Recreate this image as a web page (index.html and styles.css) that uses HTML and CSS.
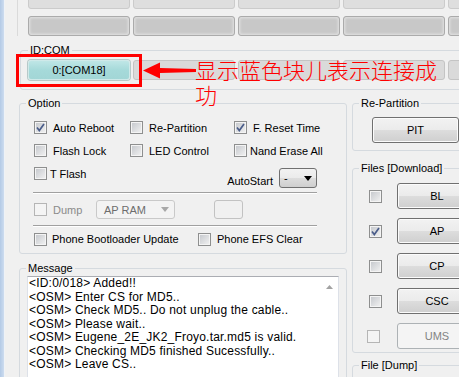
FILE: index.html
```html
<!DOCTYPE html>
<html lang="zh-CN">
<head>
  <meta charset="UTF-8" />
  <title>Odin</title>
  <link rel="stylesheet" href="styles.css">
</head>
<body>

<div class="window">
  <div class="edge"></div>

  <div class="main">
    <div class="ports">
      <div class="slot-row faded">
        <span class="slot"></span><span class="slot"></span><span class="slot"></span><span class="slot"></span><span class="slot"></span>
      </div>
      <div class="slot-row dim">
        <span class="slot"></span><span class="slot"></span><span class="slot"></span><span class="slot"></span><span class="slot"></span>
      </div>
    </div>

    <fieldset class="group idcom">
      <legend>ID:COM</legend>
      <div class="box">
        <div class="slot-row">
          <span class="slot com on">0:[COM18]</span><span class="slot com"></span><span class="slot com"></span><span class="slot com"></span><span class="slot com"></span>
        </div>
      </div>
    </fieldset>

    <div class="columns">
      <div class="left">
        <fieldset class="group option">
          <legend>Option</legend>
          <div class="box">
            <div class="opt-grid">
              <label class="chk"><span class="cb on"><svg viewBox="0 0 11 11"><path d="M2 5.5 L4.3 8.5 L9 2"/></svg></span>Auto Reboot</label>
              <label class="chk"><span class="cb"></span>Re-Partition</label>
              <label class="chk"><span class="cb on"><svg viewBox="0 0 11 11"><path d="M2 5.5 L4.3 8.5 L9 2"/></svg></span>F. Reset Time</label>
              <label class="chk"><span class="cb"></span>Flash Lock</label>
              <label class="chk"><span class="cb"></span>LED Control</label>
              <label class="chk tight"><span class="cb"></span>Nand Erase All</label>
            </div>
            <div class="row3">
              <label class="chk tight"><span class="cb"></span>T Flash</label>
              <div class="autostart">
                <span class="auto-label">AutoStart</span>
                <span class="select">-<svg class="drop" viewBox="0 0 8 5"><path d="M0 0 H8 L4 5 Z"/></svg></span>
              </div>
            </div>
            <div class="sep"></div>
            <div class="dump-row">
              <label class="chk off dump"><span class="cb"></span>Dump</label>
              <span class="combo">AP RAM<svg class="drop" viewBox="0 0 8 5"><path d="M0 0 H8 L4 5 Z"/></svg></span>
              <span class="blank"></span>
            </div>
            <div class="sep second"></div>
            <div class="boot-row">
              <label class="chk boot"><span class="cb"></span>Phone Bootloader Update</label>
              <label class="chk"><span class="cb"></span>Phone EFS Clear</label>
            </div>
          </div>
        </fieldset>

        <fieldset class="group message">
          <legend>Message</legend>
          <div class="box">
            <div class="log">
              <div class="log-text">
                &lt;ID:0/018&gt; Added!!<br>
                &lt;OSM&gt; Enter CS for MD5..<br>
                &lt;OSM&gt; Check MD5.. Do not unplug the cable..<br>
                &lt;OSM&gt; Please wait..<br>
                &lt;OSM&gt; Eugene_2E_JK2_Froyo.tar.md5 is valid.<br>
                &lt;OSM&gt; Checking MD5 finished Sucessfully..<br>
                &lt;OSM&gt; Leave CS..
              </div>
              <div class="scroll"><svg class="up" viewBox="0 0 7 4"><path d="M0 4 L3.5 0 L7 4 Z"/></svg></div>
            </div>
          </div>
        </fieldset>
      </div>

      <div class="right">
        <fieldset class="group repart">
          <legend>Re-Partition</legend>
          <div class="box">
            <button class="btn pit">PIT</button>
          </div>
        </fieldset>

        <fieldset class="group files">
          <legend>Files [Download]</legend>
          <div class="box">
            <div class="file-row"><span class="cb"></span><button class="btn">BL</button></div>
            <div class="file-row"><span class="cb on"><svg viewBox="0 0 11 11"><path d="M2 5.5 L4.3 8.5 L9 2"/></svg></span><button class="btn">AP</button></div>
            <div class="file-row"><span class="cb"></span><button class="btn">CP</button></div>
            <div class="file-row"><span class="cb"></span><button class="btn">CSC</button></div>
            <div class="file-row off"><span class="cb"></span><button class="btn" disabled>UMS</button></div>
          </div>
        </fieldset>

        <fieldset class="group filedump">
          <legend>File [Dump]</legend>
          <div class="box"></div>
        </fieldset>
      </div>
    </div>
  </div>

  <div class="mark"></div>
  <svg class="arrow" viewBox="0 0 53 17"><path d="M0 8.5 L17 0.5 L17 6 L53 7 L53 10 L17 11 L17 16.5 Z"/></svg>
  <p class="note">显示蓝色块儿表示连接成功</p>
</div>

</body>
</html>
```

FILE: styles.css
```css
* {
  margin: 0;
  padding: 0;
  box-sizing: border-box;
}

html, body {
  width: 459px;
  height: 377px;
  overflow: hidden;
  background: #f0f0f0;
}

body {
  font-family: 'Liberation Sans', Arial, sans-serif;
  font-size: 11px;
  color: #000;
}

.window {
  position: relative;
  display: flex;
  height: 377px;
}

.edge {
  flex: none;
  width: 5px;
  background: linear-gradient(90deg, #b3cae6, #cddcef);
  border-right: 1px solid #eef2f7;
}

.main {
  flex: none;
  width: 560px;
}

/* port slots at the top */
.ports {
  margin-left: 12px;
  border-left: 1px solid #dadada;
  padding-left: 10px;
}

.slot-row {
  display: flex;
  gap: 3px;
}

.slot {
  flex: none;
  width: 102px;
  height: 20px;
  border-radius: 3px;
}

.faded {
  margin-top: -11px;
}

.faded .slot {
  background: #dedede;
  border: 1px solid #cbcbcb;
}

.dim {
  margin-top: 7px;
}

.dim .slot {
  background: #c8c8c8;
  border: 1px solid #ababab;
  box-shadow: inset 0 0 3px 1px #e2e2e2;
}

/* group boxes */
.group {
  border: 1px solid #d5dadf;
  border-radius: 3px;
  min-width: 0;
}

.group legend {
  margin-left: 6px;
  padding: 0 2px;
  line-height: 13px;
}

.idcom {
  margin: 8px 0 0 15px;
}

.idcom legend {
  margin-left: 7px;
}

.idcom .box {
  padding: 3px 0 9px 7px;
}

.com {
  display: flex;
  align-items: center;
  justify-content: center;
  background: #dadada;
  border: 1px solid #c4c4c4;
}

.com.on {
  background: linear-gradient(#bfe6e6, #a6dada 50%, #a2d6d6);
  border: 1px solid #cfe9e9;
  box-shadow: 0 0 0 1px #b7c9c9;
}

.columns {
  display: flex;
  gap: 5px;
  margin: 7px 0 0 14px;
}

.left {
  width: 328px;
}

.right {
  width: 126px;
}

/* option box */
.option .box {
  padding: 6px 0 3px 14px;
}

.opt-grid {
  display: grid;
  grid-template-columns: 96px 104px auto;
  grid-auto-rows: 23px;
}

.chk {
  display: flex;
  align-items: center;
  gap: 6px;
  white-space: nowrap;
}

.chk.tight {
  gap: 3px;
}

.cb {
  flex: none;
  width: 13px;
  height: 13px;
  border: 1px solid #8e8f8f;
  background: linear-gradient(135deg, #c3c6cb, #f3f3f3);
  box-shadow: inset 0 0 0 1px #f4f4f4;
}

.cb svg {
  display: block;
  width: 11px;
  height: 11px;
}

.cb svg path {
  fill: none;
  stroke: #4a5d8a;
  stroke-width: 1.7;
}

.off .cb {
  border-color: #b5b5b5;
  background: #f4f4f4;
  box-shadow: none;
}

.off {
  color: #8a8a8a;
}

.row3 {
  display: flex;
  justify-content: space-between;
  width: 283px;
  height: 26px;
}

.row3 .chk {
  height: 23px;
}

.autostart {
  display: flex;
  align-items: flex-end;
  gap: 6px;
  padding-top: 6px;
}

.auto-label {
  padding-bottom: 1px;
}

.select {
  display: flex;
  align-items: center;
  justify-content: space-between;
  width: 38px;
  height: 20px;
  padding: 0 4px 0 4px;
  border: 1px solid #707070;
  border-radius: 3px;
  background: linear-gradient(#f2f2f2, #ebebeb 50%, #dddddd 50%, #cfcfcf);
}

.drop {
  width: 8px;
  height: 5px;
}

.select .drop path {
  fill: #000;
}

.sep {
  width: 284px;
  margin: 4px 0 0 -1px;
  border-top: 1px solid #a0a0a0;
  border-bottom: 1px solid #fff;
}

.sep.second {
  margin-top: 6px;
}

.dump-row {
  display: flex;
  align-items: center;
  height: 19px;
  margin-top: 6px;
}

.dump {
  width: 62px;
}

.combo {
  display: flex;
  align-items: center;
  justify-content: space-between;
  width: 79px;
  height: 19px;
  padding: 0 5px 0 7px;
  border: 1px solid #c9c9c9;
  border-radius: 3px;
  background: #f3f3f3;
  color: #6d6d6d;
}

.combo .drop path {
  fill: #a8a8a8;
}

.blank {
  width: 29px;
  height: 19px;
  margin-left: 39px;
  border: 1px solid #c2c2c2;
  border-radius: 3px;
}

.boot-row {
  display: flex;
  align-items: center;
  height: 22px;
  margin-top: 1px;
}

.boot {
  width: 164px;
  gap: 5px;
}

/* message box */
.message {
  margin-top: 8px;
}

.message .box {
  padding: 1px 0 0 7px;
}

.log {
  display: flex;
  width: 312px;
  height: 120px;
  background: #fff;
  border: 1px solid #dde1e8;
  border-top-color: #abadb3;
}

.log-text {
  flex: 1;
  padding: 0 1px;
  font-size: 12px;
  letter-spacing: 0.2px;
  line-height: 13.5px;
  white-space: nowrap;
  overflow: hidden;
}

.scroll {
  flex: none;
  width: 17px;
  display: flex;
  justify-content: center;
  padding-top: 8px;
}

.up {
  width: 7px;
  height: 4px;
}

.up path {
  fill: #a2a2a2;
}

/* buttons on the right */
.btn {
  display: block;
  width: 86px;
  height: 26px;
  border: 1px solid #707070;
  border-radius: 3px;
  background: linear-gradient(#f2f2f2, #ebebeb 50%, #dddddd 50%, #cfcfcf);
  box-shadow: inset 0 0 0 1px #fbfbfb;
  font-family: 'Liberation Sans', Arial, sans-serif;
  font-size: 11px;
  color: #000;
}

.btn:disabled {
  border-color: #adb2b5;
  background: #f4f4f4;
  box-shadow: none;
  color: #838383;
}

.repart .box {
  padding: 7px 0 7px 19px;
}

.pit {
  width: 87px;
}

.files {
  margin-top: 11px;
}

.files .box {
  display: flex;
  flex-direction: column;
  gap: 9px;
  padding: 8px 0 3px 16px;
}

.file-row {
  display: flex;
  align-items: center;
  gap: 15px;
}

.file-row.off {
  margin-left: -2px;
  gap: 17px;
}

.filedump {
  margin-top: 6px;
}

.filedump .box {
  height: 40px;
}

/* red annotation */
.mark {
  position: absolute;
  left: 16px;
  top: 54px;
  width: 126px;
  height: 33px;
  border: 3px solid #ff0000;
}

.arrow {
  position: absolute;
  left: 143px;
  top: 62px;
  width: 53px;
  height: 17px;
}

.arrow path {
  fill: #ff0000;
}

.note {
  position: absolute;
  left: 195px;
  top: 57px;
  width: 245px;
  font-family: 'Noto Sans CJK SC', sans-serif;
  font-size: 22px;
  font-weight: 300;
  line-height: 25px;
  color: #ff0000;
}
```
